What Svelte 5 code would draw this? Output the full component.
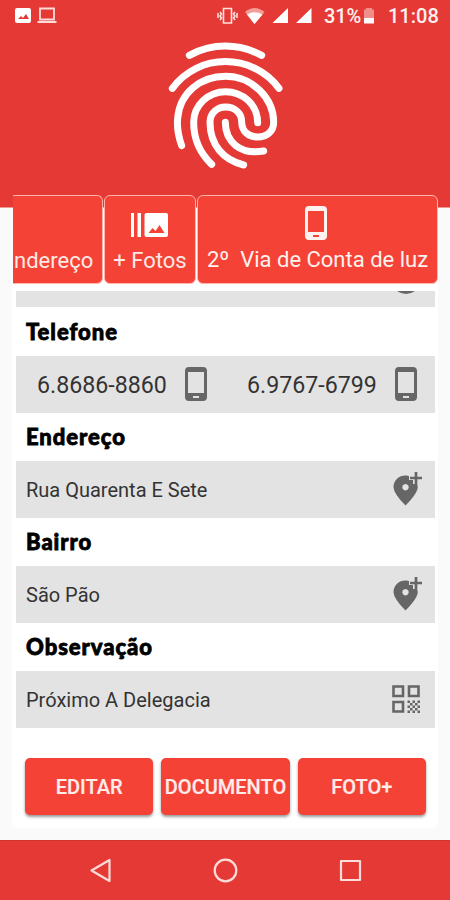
<script>
  const fields = [
    { label: 'Endereço', value: 'Rua Quarenta E Sete', icon: 'pin' },
    { label: 'Bairro', value: 'São Pão', icon: 'pin' },
    { label: 'Observação', value: 'Próximo A Delegacia', icon: 'qr' }
  ];
  const phones = ['6.8686-8860', '6.9767-6799'];
  const actions = ['EDITAR', 'DOCUMENTO', 'FOTO+'];
  const dots = [[0,0],[2,0],[4,0],[1,1],[3,1],[0,2],[2,2],[4,2],[1,3],[3,3],[0,4],[2,4],[4,4]];
</script>

{#snippet phone()}
  <svg width="22" height="34" viewBox="0 0 22 34" class="phone">
    <path fill="currentColor" fill-rule="evenodd" d="M4 0h14q4 0 4 4v26q0 4-4 4H4q-4 0-4-4V4q0-4 4-4zM3 5v21h16V5zM8 29v2h6v-2z" />
  </svg>
{/snippet}

<div class="screen">
  <header class="status">
    <svg class="left" width="58" height="32" viewBox="0 0 58 32">
      <rect x="15" y="8" width="16" height="15" rx="2" fill="#fff" />
      <path d="M18 19l3-3 2 2 3-4 3 5z" fill="#e53935" />
      <path d="M40 8.5h14v11H40zM37.5 22h19" fill="none" stroke="#ffdcd9" stroke-width="1.8" />
    </svg>
    <svg width="97" height="32" viewBox="0 0 97 32">
      <g fill="none" stroke="#ffe1de" stroke-width="1.6">
        <path d="M8.500 8.500h8v14.500h-8zM5 12l1.500 2-1.500 2 1.500 2-1.500 2M3 13v5M20 12l-1.500 2 1.500 2-1.500 2 1.500 2M22 13v5" />
      </g>
      <path d="M30 12Q39.500 4 49.500 12L39.500 24z" fill="#f39c98" />
      <path d="M32 14.500Q39.500 10 47.500 14.500L39.500 24z" fill="#fff" />
      <path d="M57.500 23L73 8v15zM81 23L96.500 8v15z" fill="#fff" />
    </svg>
    <span class="percent">31%</span>
    <svg class="battery" width="12" height="32" viewBox="0 0 12 32">
      <path d="M3 8h6v1.500h2V18H1V9.500h2z" fill="#f08e8a" />
      <path d="M1 18h10v5.500H1z" fill="#fff" />
    </svg>
    <span class="time">11:08</span>
  </header>

  <div class="hero">
    <svg width="140" height="145" viewBox="0 0 420 435" fill="none" stroke="#fff" stroke-width="21" stroke-linecap="round">
      <path d="M103 61C170 24 252 24 320 61" />
      <path d="M52 160C130 53 292 53 372 160" />
      <path d="M80 332C67 295 66 270 68 250C74 175 135 124 212 124C292 124 356 190 356 262C356 290 335 306 308 306C280 306 260 288 260 260C260 235 240 216 212 216C186 216 165 235 165 262C165 330 205 375 266 390" />
      <path d="M308 263C308 208 262 170 212 170C160 170 116 210 116 262C116 315 135 355 170 388" />
      <path d="M211 262C211 320 255 360 326 348" />
    </svg>
  </div>

  <nav class="tabs">
    <div class="tab first"><span>ndereço</span></div>
    <div class="tab second">
      <svg width="38" height="26" viewBox="0 0 38 26">
        <path d="M0 1h3v24H0zM6.500 1H10v24H6.500z" fill="#fff" />
        <rect x="13.500" y="1" width="23.500" height="24" rx="2" fill="#fff" />
        <path d="M17.500 21l4-5 3 3 4-6 5 8z" fill="#f44336" />
      </svg>
      <span>+ Fotos</span>
    </div>
    <div class="tab third">
      {@render phone()}
      <span>2º&nbsp; Via de Conta de luz</span>
    </div>
  </nav>

  <main class="card">
    <div class="partial"><svg width="18" height="4" viewBox="0 0 18 4"><path d="M0 0h18Q9 6 0 0z" fill="#666" /></svg></div>
    <h2>Telefone</h2>
    <div class="value phones">
      {#each phones as number}
        <div class="entry"><span>{number}</span>{@render phone()}</div>
      {/each}
    </div>
    {#each fields as field}
      <h2>{field.label}</h2>
      <div class="value">
        <span>{field.value}</span>
        {#if field.icon === 'pin'}
          <svg class="pin" width="29" height="34" viewBox="0 0 29 34">
            <path fill="#666" fill-rule="evenodd" d="M12.500 3.500Q14.500 3.300 16 4v4h4v4h4.200Q25 14.500 24.500 17Q23 23 12.500 33.500Q1 22 .5 15.500C.5 8 6 3.500 12.500 3.500zM12.500 12a3.200 3.200 0 1 0 .01 0z" />
            <path d="M23 0v12M17 6h12" stroke="#666" stroke-width="2.700" />
          </svg>
        {:else}
          <svg class="qr" width="28" height="28" viewBox="0 0 28 28">
            <path d="M1.500 1.500h9.500v9.500H1.500zM17 1.500h9.500v9.500H17zM1.500 17h9.500v9.500H1.500z" fill="none" stroke="#666" stroke-width="2.600" />
            {#each dots as [x, y]}
              <rect x={15.5 + x * 2.5} y={15.5 + y * 2.5} width="2.500" height="2.500" fill="#666" />
            {/each}
          </svg>
        {/if}
      </div>
    {/each}
    <div class="actions">
      {#each actions as action}<button>{action}</button>{/each}
    </div>
  </main>

  <footer>
    <svg width="450" height="59" viewBox="0 0 450 59" fill="none" stroke="#ffdcd9" stroke-width="2.200" stroke-linejoin="round">
      <path d="M91.500 29.500L109.500 19v21z" />
      <circle cx="225.500" cy="29.500" r="10.800" />
      <rect x="341" y="20" width="19" height="19" />
    </svg>
  </footer>
</div>

<style>
  :global(body) { margin: 0; }
  .screen {
    width: 450px;
    height: 900px;
    overflow: hidden;
    display: flex;
    flex-direction: column;
    font-family: Roboto, sans-serif;
    background: linear-gradient(#e53935 207px, #fafafa 208px);
  }
  svg { display: block; flex: none; }
  .status { height: 32px; display: flex; align-items: center; color: #fff1f0; font-size: 20px; font-weight: 500; white-space: nowrap; }
  .status .left { margin-right: 157px; }
  .percent { width: 39px; margin-left: 12px; letter-spacing: -0.1px; }
  .time { margin-left: 13px; }
  .hero { height: 163px; display: flex; justify-content: center; align-items: flex-start; }
  .hero svg { margin: 3px 0 0; }
  .tabs { height: 89px; margin: 0 12px 0 13px; display: flex; gap: 1px; background: linear-gradient(#e53935 12px, #fff 13px); }
  .tab {
    box-sizing: border-box;
    height: 89px;
    border: 1.5px solid #ffb4ae;
    border-radius: 6px;
    background: #f44336;
    color: #ffe9e6;
    font-size: 22px;
    display: flex;
    flex-direction: column;
    align-items: center;
    justify-content: flex-end;
    white-space: pre;
  }
  .tab span { line-height: 26px; padding-bottom: 9px; }
  .first { width: 90px; border-left: 0; border-radius: 0 6px 6px 0; align-items: flex-start; padding-left: 1px; }
  .second { width: 92px; }
  .second svg { margin-bottom: 10px; }
  .third { width: 241px; color: #fff1ef; }
  .third svg { margin: 0 4px 8px 0; }
  .third span { padding-bottom: 10px; }
  .third svg { margin-bottom: 7px; }
  .card { box-sizing: border-box; height: 544px; margin: 0 12px; padding: 7px 3px 0 4px; background: #fff; border-radius: 0 0 5px 5px; }
  .partial { height: 16px; background: #e3e3e3; display: flex; justify-content: flex-end; padding-right: 20px; }
  h2 {
    height: 49px;
    margin: 0;
    padding-left: 10px;
    font: 900 22px/49px Lato, sans-serif;
    letter-spacing: 0.95px;
    color: #000;
    -webkit-text-stroke: 0.8px #000;
  }
  .value { box-sizing: border-box; height: 57px; background: #e3e3e3; display: flex; align-items: center; justify-content: space-between; padding: 0 13px 0 10px; color: #333; font-size: 20px; }
  .value + h2 { height: 48px; line-height: 48px; }
  .phones { padding: 1px 18px 0 21px; font-size: 23.2px; }
  .entry { width: 170px; display: flex; align-items: center; justify-content: space-between; }
  .value .phone { color: #666; margin-top: -2px; }
  .pin { margin-top: -2px; }
  .qr { margin: -2px 2px 0 0; }
  .actions { display: flex; gap: 8px; padding: 30px 9px 0; }
  button {
    flex: 1 1 0;
    min-width: 0;
    height: 57px;
    padding: 0;
    border: 0;
    border-radius: 5px;
    background: #f44336;
    box-shadow: 0 2px 3px #0006;
    color: #ffeceb;
    font: 500 20px Roboto, sans-serif;
    -webkit-text-stroke: 0.2px #ffeceb;
    display: flex;
    align-items: center;
    justify-content: center;
  }
  footer { height: 60px; margin-top: 12px; box-sizing: border-box; border-top: 1px solid #d13431; background: #e53935; }
</style>
